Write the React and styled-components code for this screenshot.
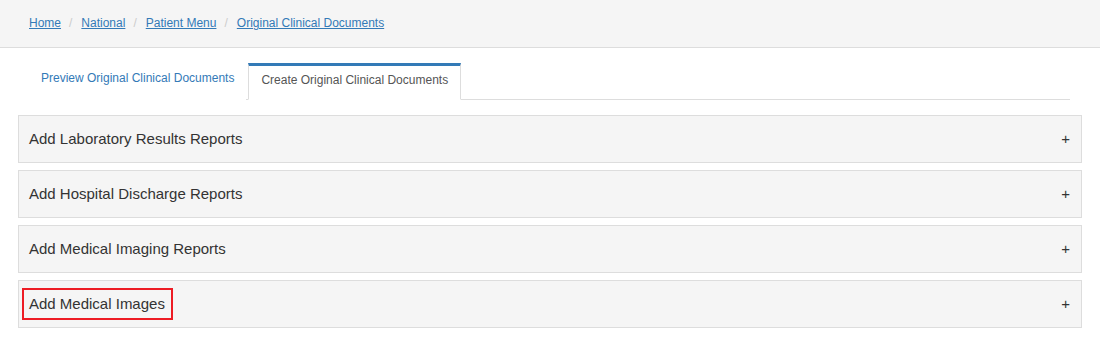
import React from "react";
import styled, { createGlobalStyle } from "styled-components";

const GlobalStyle = createGlobalStyle`
  html, body {
    margin: 0;
    padding: 0;
    background: #fff;
    font-family: "Liberation Sans", Arial, sans-serif;
    color: #333;
  }
`;

const crumbs = ["Home", "National", "Patient Menu", "Original Clinical Documents"];
const tabs = [
  { label: "Preview Original Clinical Documents", active: false },
  { label: "Create Original Clinical Documents", active: true },
];
const sections = [
  { title: "Add Laboratory Results Reports" },
  { title: "Add Hospital Discharge Reports" },
  { title: "Add Medical Imaging Reports" },
  { title: "Add Medical Images", marked: true },
];

function App() {
  return (
    <>
      <GlobalStyle />
      <StHeader>
        <StCrumbs>
          {crumbs.map((c, i) => (
            <li key={c}>
              {i > 0 && <span className="sep">/</span>}
              <a href="#">{c}</a>
            </li>
          ))}
        </StCrumbs>
      </StHeader>
      <StContent>
        <StTabList>
          {tabs.map((t) => (
            <StTab key={t.label} $active={t.active}>
              {t.label}
            </StTab>
          ))}
        </StTabList>
        <StPanels>
          {sections.map((s) => (
            <StPanel key={s.title}>
              <StTitle $marked={s.marked}>{s.title}</StTitle>
              <span className="plus">+</span>
            </StPanel>
          ))}
        </StPanels>
      </StContent>
    </>
  );
}

const StHeader = styled.div`
  height: 47px;
  background-color: #f5f5f5;
  border-bottom: 1px solid #ddd;
  display: flex;
  align-items: center;
  padding: 0 29px;
`;

const StCrumbs = styled.ol`
  display: flex;
  margin: 0;
  padding: 0;
  list-style: none;
  font-size: 12px;
  line-height: 17px;
  li {
    display: flex;
  }
  .sep {
    color: #ccc;
    padding: 0 9px 0 8px;
  }
  a {
    color: #337ab7;
    text-decoration: underline;
  }
`;

const StContent = styled.div`
  padding: 15px 18px;
`;

const StTabList = styled.div`
  display: flex;
  align-items: flex-end;
  margin: 0 12px 15px 11px;
  border-bottom: 1px solid #ddd;
`;

const StTab = styled.div`
  margin-right: 2px;
  margin-bottom: -1px;
  padding: ${(p) => (p.$active ? "6px 12px 10px" : "6px 11px 12px")};
  font-size: 12px;
  line-height: 17px;
  color: ${(p) => (p.$active ? "#555" : "#337ab7")};
  background: #fff;
  border: 1px solid ${(p) => (p.$active ? "#ddd" : "transparent")};
  border-top: ${(p) => (p.$active ? "3px solid #337ab7" : "1px solid transparent")};
  border-bottom-color: ${(p) => (p.$active ? "#fff" : "transparent")};
  height: 37px;
  box-sizing: border-box;
`;

const StPanels = styled.div`
  display: flex;
  flex-direction: column;
  gap: 7px;
`;

const StPanel = styled.div`
  height: 48px;
  box-sizing: border-box;
  display: flex;
  align-items: center;
  justify-content: space-between;
  padding: 0 10px;
  background-color: #f5f5f5;
  border: 1px solid #ddd;
  .plus {
    font-size: 15px;
    line-height: 18px;
    color: #333;
    padding-right: 1px;
  }
`;

const StTitle = styled.span`
  font-size: 15px;
  line-height: 18px;
  color: #333;
  ${(p) =>
    p.$marked &&
    `
    border: 2px solid #ed1c24;
    padding: 5px 6px 5px 5px;
    margin: -7px -8px -7px -7px;
  `}
`;

export default App;
